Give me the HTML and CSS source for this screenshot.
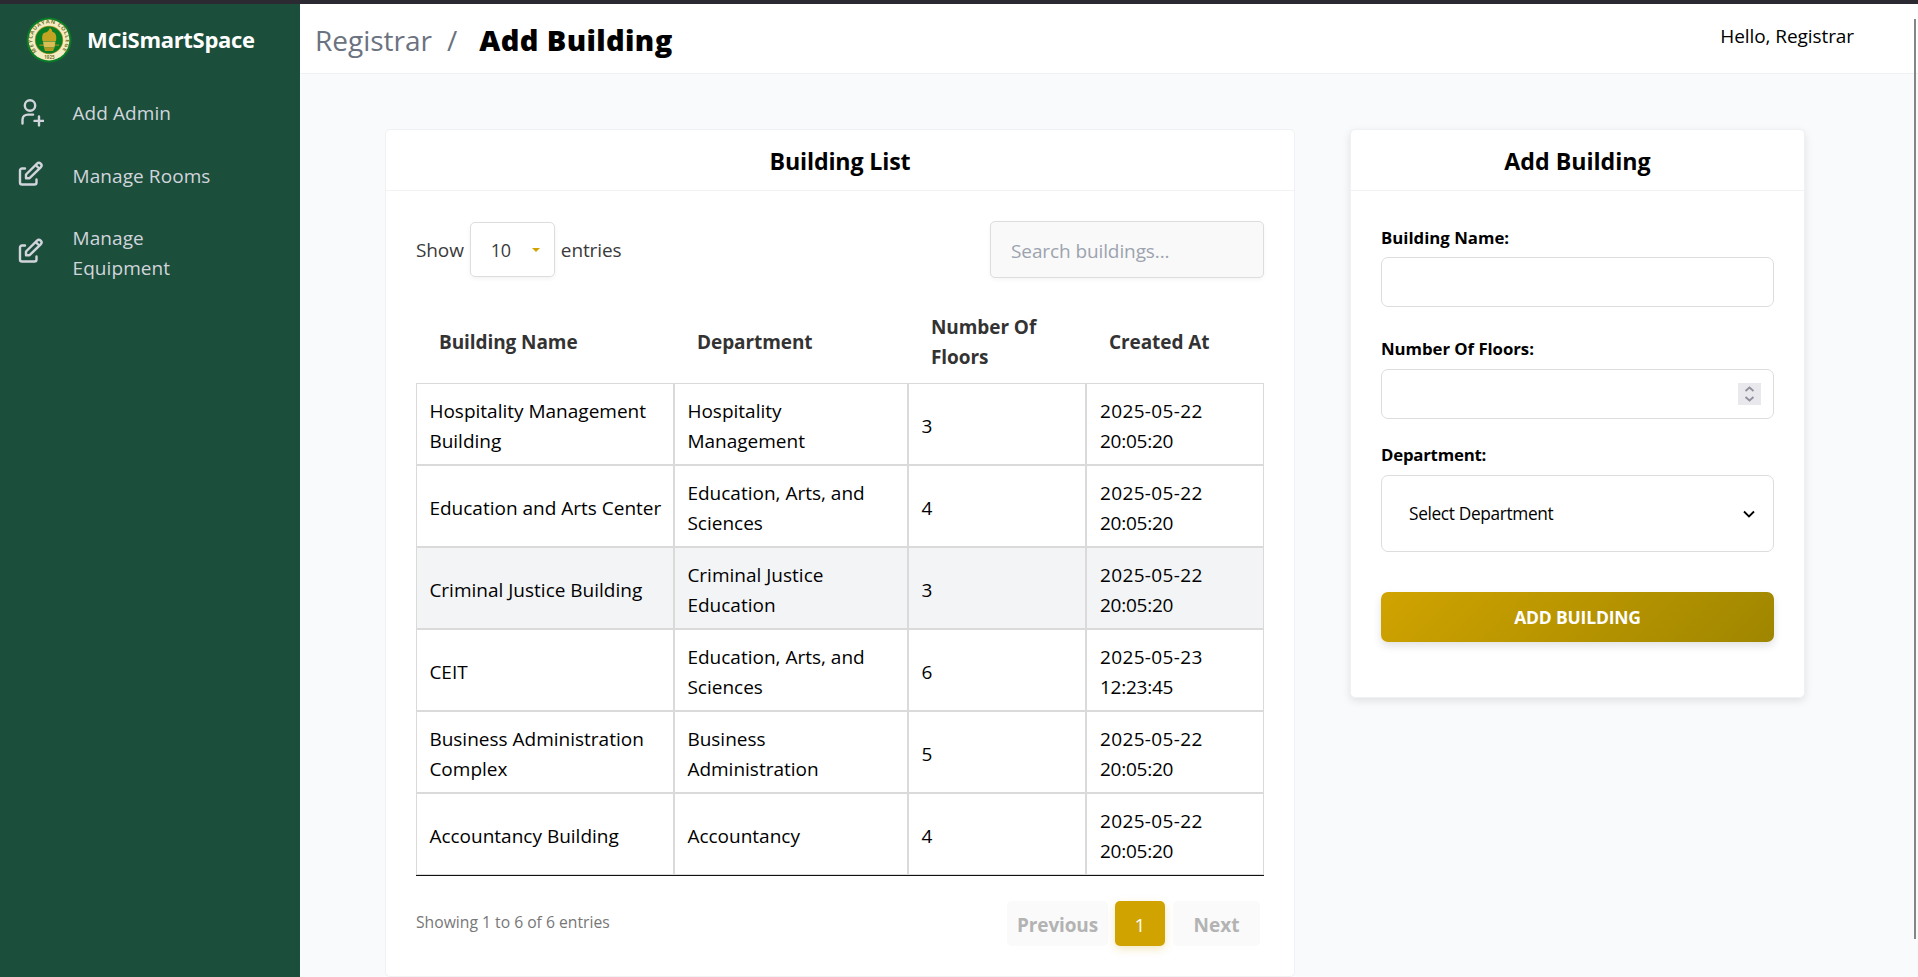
FILE: index.html
```html
<!DOCTYPE html>
<html lang="en">
<head>
<meta charset="utf-8">
<title>Add Building</title>
<link rel="stylesheet" href="styles.css">
</head>
<body>
<div class="app">
  <aside class="sidebar">
    <div class="brand">
      <svg class="logo" viewBox="0 0 46 46">
        <defs><path id="ring" d="M11 34.500A16.600 16.600 0 1 1 35 34.500"/></defs>
        <circle cx="23" cy="23" r="22.5" fill="#087d26"/>
        <circle cx="23" cy="23" r="20.4" fill="#f3ecc4"/>
        <circle cx="23" cy="23" r="14.2" fill="#b79a2a"/>
        <circle cx="23" cy="23" r="13.5" fill="#087d26"/>
        <text class="seal"><textPath href="#ring" startOffset="0" textLength="75">MEYCAUAYAN COLLEGE</textPath></text>
        <text class="seal year" x="18.300" y="41.800">1925</text>
        <path d="M16.500 24c-1-5 0-8 3-8.500l1.500-.5c1-1 2-2 3-4 2 1 2 3 2.500 4 3 0 4.500 4 3.500 9z" fill="#c2a422"/>
        <path d="M13.500 27.500h19.500v1.300H13.500z" fill="#9b8b1c"/>
        <path d="M17 24.500h12.500l-1 6H18z" fill="#d9bf55"/>
        <path d="M18 30.500h10.500l-1.500 3.500h-8z" fill="#b3981f"/>
      </svg>
      <span class="brand-name">MCiSmartSpace</span>
    </div>
    <nav class="nav">
      <a class="nav-item">
        <svg class="nav-icon" viewBox="0 0 28 30"><circle cx="14" cy="7.500" r="5.200"/><path d="M6.500 25.500v-3.700c0-3.300 2.400-5.200 5.600-5.200h5M23 18.400v9M18.500 22.900h9"/></svg>
        <span>Add Admin</span>
      </a>
      <a class="nav-item rooms">
        <svg class="nav-icon" viewBox="0 0 28 30"><path d="M9 7.500H6c-1.100 0-2 .9-2 2v12c0 1.100.9 2 2 2h12.500c1.100 0 2-.9 2-2v-3M10 17.200v-3.700L21 2.700a2.500 2.500 0 0 1 3.700 3.700L13.600 17.200zM20 4.300l3.200 3.200"/></svg>
        <span>Manage Rooms</span>
      </a>
      <a class="nav-item equip">
        <svg class="nav-icon" viewBox="0 0 28 30"><path d="M9 7.500H6c-1.100 0-2 .9-2 2v12c0 1.100.9 2 2 2h12.500c1.100 0 2-.9 2-2v-3M10 17.200v-3.700L21 2.700a2.500 2.500 0 0 1 3.700 3.700L13.600 17.200zM20 4.300l3.200 3.200"/></svg>
        <span>Manage<br>Equipment</span>
      </a>
    </nav>
  </aside>
  <div class="main">
    <header class="topbar">
      <div class="crumbs"><span class="crumb">Registrar</span><span class="slash">/</span><span class="current">Add Building</span></div>
      <span class="hello">Hello, Registrar</span>
    </header>
    <main class="content">
      <section class="card list">
        <h2 class="card-title">Building List</h2>
        <div class="list-body">
          <div class="controls">
            <div class="length"><span>Show</span><span class="length-select"><span>10</span><svg class="caret" viewBox="0 0 8 4"><path d="M0 0h8L4 4z"/></svg></span><span>entries</span></div>
            <div class="search">Search buildings...</div>
          </div>
          <table class="grid">
            <colgroup><col class="c1"><col class="c2"><col class="c3"><col class="c3"></colgroup>
            <thead><tr><th>Building Name</th><th>Department</th><th>Number Of<br>Floors</th><th>Created At</th></tr></thead>
            <tbody>
              <tr><td>Hospitality Management<br>Building</td><td>Hospitality<br>Management</td><td>3</td><td class="date">2025-05-22<br><span class="time">20:05:20</span></td></tr>
              <tr><td>Education and Arts Center</td><td>Education, Arts, and<br>Sciences</td><td>4</td><td class="date">2025-05-22<br><span class="time">20:05:20</span></td></tr>
              <tr class="hover"><td>Criminal Justice Building</td><td>Criminal Justice<br>Education</td><td>3</td><td class="date">2025-05-22<br><span class="time">20:05:20</span></td></tr>
              <tr><td>CEIT</td><td>Education, Arts, and<br>Sciences</td><td>6</td><td class="date">2025-05-23<br><span class="time">12:23:45</span></td></tr>
              <tr><td>Business Administration<br>Complex</td><td>Business<br>Administration</td><td>5</td><td class="date">2025-05-22<br><span class="time">20:05:20</span></td></tr>
              <tr><td>Accountancy Building</td><td>Accountancy</td><td>4</td><td class="date">2025-05-22<br><span class="time">20:05:20</span></td></tr>
            </tbody>
          </table>
          <div class="footer">
            <span class="info">Showing 1 to 6 of 6 entries</span>
            <div class="pager"><span class="page prev">Previous</span><span class="page active">1</span><span class="page next">Next</span></div>
          </div>
        </div>
      </section>
      <section class="card form">
        <h2 class="card-title">Add Building</h2>
        <div class="form-body">
          <label class="label">Building Name:</label>
          <div class="input"></div>
          <label class="label floors">Number Of Floors:</label>
          <div class="input number"><span class="spinner"><svg viewBox="0 0 23 22"><path d="M7.500 8l4-3.500 4 3.500M7.500 14l4 3.500 4-3.500"/></svg></span></div>
          <label class="label dept">Department:</label>
          <div class="input select"><span>Select Department</span><svg class="chevron" viewBox="0 0 12 8"><path d="M1 1.500l5 5 5-5"/></svg></div>
          <div class="submit">ADD BUILDING</div>
        </div>
      </section>
    </main>
  </div>
  <div class="scrollbar"></div>
</div>
</body>
</html>
```
FILE: styles.css
```css
* { box-sizing: border-box; }
body { margin: 0; background: #f9fafc; color: #000; font: 19px/30px "Open Sans", "Noto Sans", sans-serif; overflow: hidden; }
.app { display: flex; height: 977px; border-top: 4px solid #2b2a33; }
.sidebar { flex: none; width: 300px; background: #1c4e3c; }
.brand { display: flex; align-items: center; height: 71px; padding-left: 26px; }
.logo { width: 46px; height: 46px; }
.seal { font: 700 5.5px "Open Sans", sans-serif; fill: #77752c; }
.year { font-size: 4.5px; }
.brand-name { margin-left: 15px; padding-bottom: 2px; color: #fff; font-size: 22px; font-weight: 700; letter-spacing: -.3px; }
.nav { color: #d1d5db; padding: 20px 0 0 16px; letter-spacing: .08px; }
.nav-item { display: flex; align-items: flex-start; padding: 3px 0; gap: 28.5px; }
.nav-icon { flex: none; width: 28px; height: 30px; fill: none; stroke: #d1d5db; stroke-width: 2.4; stroke-linecap: round; stroke-linejoin: round; }
.rooms { margin-top: 27px; }
.equip { margin-top: 26px; }
.equip .nav-icon { margin-top: 15px; }
.main { flex: 1; min-width: 0; }
.topbar { display: flex; justify-content: space-between; height: 70px; background: #fff; border-bottom: 1px solid #f0f1f3; padding: 0 64px 0 15px; }
.crumbs { display: flex; line-height: 36px; padding-top: 18px; font-size: 28px; }
.crumb, .slash { color: #6b7280; }
.slash { margin-left: 15px; }
.current { margin-left: 22px; font-size: 29px; font-weight: 800; letter-spacing: .38px; }
.hello { padding-top: 17px; letter-spacing: -.08px; }
.content { display: flex; align-items: flex-start; gap: 55px; padding: 55px 0 0 85px; }
.card { background: #fff; border: 1px solid #f0f1f4; border-radius: 5px; }
.list { width: 910px; height: 848px; }
.form { width: 455px; height: 569px; box-shadow: 0 3px 8px rgba(0,0,0,.1); }
.card-title { margin: 0; height: 61px; text-align: center; font-size: 23.2px; line-height: 62px; font-weight: 700; border-bottom: 1px solid #f1f2f4; }
.list .card-title { letter-spacing: -.15px; }
.list-body { padding: 30px 30px 0; }
.controls { display: flex; justify-content: space-between; align-items: center; height: 57px; }
.length { display: flex; align-items: center; color: #3a3a3a; letter-spacing: -.1px; }
.length-select { display: flex; align-items: center; justify-content: space-between; width: 85px; height: 55px; margin: 0 6px; padding: 0 14px 0 20px; border: 1px solid #ddd; border-radius: 5px; box-shadow: 0 2px 4px rgba(0,0,0,.05); font-size: 18px; letter-spacing: -.3px; }
.caret { width: 8px; height: 4px; fill: #d0a300; }
.search { width: 274px; height: 57px; padding: 14px 20px; border: 1px solid #ddd; border-radius: 5px; background: #f9f9f9; color: #9ca3af; box-shadow: 0 2px 4px rgba(0,0,0,.04); letter-spacing: -.1px; }
.grid { width: 848px; table-layout: fixed; border-collapse: separate; border-spacing: 0; margin-top: 23px; border-bottom: 1px solid #111; }
.c1 { width: 258px; }
.c2 { width: 234px; }
.c3 { width: 178px; }
.grid th { height: 82px; padding: 0 23px; text-align: left; color: #333; font-weight: 700; letter-spacing: -.08px; }
.grid td { height: 82px; padding: 12px 0 8px 12.4px; border: 1px solid #dadada; white-space: nowrap; }
.grid .date { padding-left: 13px; letter-spacing: .35px; }
.time { letter-spacing: -.25px; }
.hover { background: #f3f4f6; }
.footer { display: flex; justify-content: space-between; padding-top: 25px; }
.info { color: #777; font-size: 15.7px; padding-top: 6px; }
.pager { display: flex; gap: 7px; padding-right: 4px; }
.page { display: flex; justify-content: center; align-items: center; height: 45px; padding-top: 2px; border-radius: 5px; background: #fafafa; color: #b3b3b3; font-weight: 700; }
.prev { width: 101px; letter-spacing: -.15px; }
.active { width: 50px; margin-right: 1px; background: #d0a300; color: #fff; font-weight: 400; box-shadow: 0 3px 8px rgba(208,163,0,.25); }
.next { width: 87px; }
.form-body { padding: 34px 30px 0; }
.label { display: block; height: 32px; font-size: 16.8px; line-height: 26px; font-weight: 700; }
.input { height: 50px; border: 1px solid #ddd; border-radius: 7px; }
.floors { margin-top: 30px; line-height: 24px; letter-spacing: -.05px; }
.dept { margin-top: 24px; line-height: 24px; letter-spacing: -.22px; }
.number { display: flex; justify-content: flex-end; padding: 13px 12px; }
.spinner { width: 23px; height: 22px; background: #e9e9ed; }
.spinner svg { display: block; fill: none; stroke: #8f8f9d; stroke-width: 1.8; }
.select { display: flex; justify-content: space-between; align-items: center; height: 77px; padding: 1px 18px 0 27px; font-size: 17.3px; letter-spacing: -.35px; }
.chevron { width: 12px; height: 8px; fill: none; stroke: #000; stroke-width: 1.8; }
.submit { display: flex; justify-content: center; align-items: center; height: 50px; margin-top: 40px; border-radius: 7px; background: linear-gradient(135deg, #d0a300, #9f8600); color: #fff; font-size: 17.5px; font-weight: 700; letter-spacing: -.18px; box-shadow: 0 4px 8px rgba(0,0,0,.12); }
.scrollbar { position: absolute; left: 1914px; top: 19px; width: 2px; height: 920px; background: #858585; }
```
